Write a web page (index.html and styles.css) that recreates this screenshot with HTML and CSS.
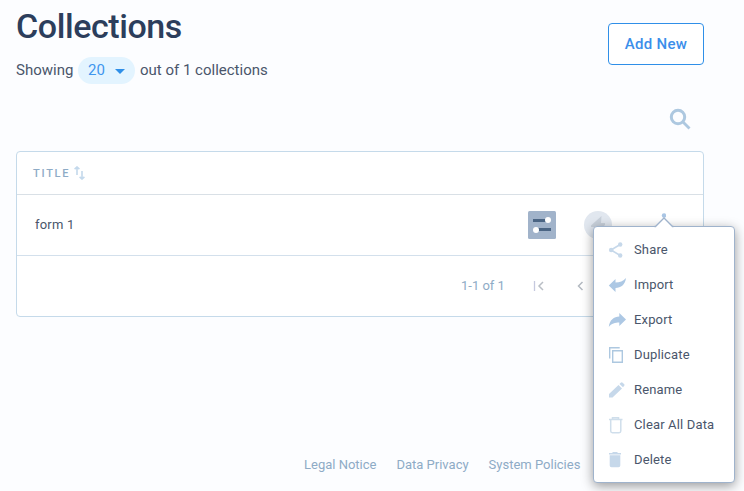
FILE: index.html
```html
<!DOCTYPE html>
<html lang="en">
<head>
<meta charset="utf-8">
<title>Collections</title>
<link rel="stylesheet" href="styles.css">
</head>
<body>
<main class="page">
  <header class="header">
    <div>
      <h1 class="heading">Collections</h1>
      <div class="summary">
        <span class="showing">Showing</span>
        <button class="count">20<svg width="10" height="5" viewBox="0 0 10 5"><path d="M0 0h10L5 5z" fill="#2f8fe8"/></svg></button>
        <span class="total">out of 1 collections</span>
      </div>
    </div>
    <button class="add">Add New</button>
  </header>
  <div class="search">
    <svg width="22" height="22" viewBox="0 0 22 22" fill="none" stroke="#adc8e0"><circle cx="9" cy="9" r="6.700" stroke-width="3"/><path d="M14 14l6.500 6.500" stroke-width="2.800"/></svg>
  </div>
  <section class="card">
    <div class="card-head">TITLE
      <svg width="11" height="14" viewBox="0 0 11 14" fill="none" stroke="#c4d9ec" stroke-width="1.600"><path d="M3 9V1.500M.6 3.200L3 1l2.400 2.200M8 5v7.500M5.600 10.800L8 13l2.400-2.200"/></svg>
    </div>
    <div class="card-row">
      <span class="name">form 1</span>
      <svg class="settings" width="28" height="28" viewBox="0 0 28 28"><rect width="28" height="28" rx="1.500" fill="#a1b3ca"/><path d="M5 9.500h15M8 18.500h15" stroke="#4b6584" stroke-width="3"/><circle cx="20" cy="9" r="3" fill="#fff"/><circle cx="8" cy="19" r="3" fill="#fff"/></svg>
      <svg class="bolt" width="28" height="28" viewBox="0 0 28 28"><circle cx="14" cy="14" r="14" fill="#e1e7ef"/><path d="M17.500 5L7 14.500V16h5.500L10 23 21 14v-2h-4z" fill="#c8d0da"/></svg>
      <svg class="dots" width="5" height="20" viewBox="0 0 5 20" fill="#a9c5e4"><circle cx="3" cy="2.500" r="2.200"/><circle cx="3" cy="10" r="2.200"/><circle cx="3" cy="17" r="2.200"/></svg>
    </div>
    <div class="card-foot">
      <span class="range">1-1 of 1</span>
      <svg class="first" width="11" height="10" viewBox="0 0 11 10" fill="none"><path d="M1.500 0v10" stroke="#c5c9df" stroke-width="1.300"/><path d="M10 1L6 5l4 4" stroke="#b9bec5" stroke-width="1.500"/></svg>
      <svg class="prev" width="7" height="10" viewBox="0 0 7 10" fill="none"><path d="M5.500 1L1.500 5l4 4" stroke="#b3b9c1" stroke-width="1.500"/></svg>
    </div>
  </section>
  <footer class="footer"><a>Legal Notice</a><a>Data Privacy</a><a>System Policies</a></footer>
</main>
<nav class="menu">
  <svg class="caret" width="20" height="11" viewBox="0 0 20 11"><path d="M1 10L10 1l9 9v1H1z" fill="#fff"/><path d="M.5 9.500h1L10 1l8.500 8.500h1" fill="none" stroke="#9fb3cc" stroke-width="1.300"/></svg>
  <div class="item"><svg viewBox="0 0 18 18" fill="#c6d8ea"><path d="M13 3L3 9l10 6" fill="none" stroke="#c6d8ea" stroke-width="1.600"/><circle cx="12.200" cy="3.500" r="2.200"/><circle cx="3.200" cy="9" r="2.300"/><circle cx="12.200" cy="14.500" r="2.200"/></svg><span>Share</span></div>
  <div class="item"><svg viewBox="0 0 18 18" fill="#adc8e4"><path d="M.8 9.500L7.500 3v3.500C11.500 6.500 15.500 5 18 2c-.7 6.500-5 10-10.500 10v4z"/></svg><span>Import</span></div>
  <div class="item"><svg viewBox="0 0 18 18" fill="#adc8e4"><path d="M18 8.500L11.300 2v3.500C6 5.500 1.500 9 .8 16c2.500-3.500 6.500-4.500 10.500-4.500V15z"/></svg><span>Export</span></div>
  <div class="item"><svg viewBox="0 0 18 18" fill="none" stroke="#adc8e0" stroke-width="1.400"><path d="M1.700 12.500V1.700h10M4.700 4.700h9.600v11.600H4.700z"/></svg><span>Duplicate</span></div>
  <div class="item"><svg viewBox="0 0 18 18" fill="#c6d8ea"><path d="M1 16.500V13L10.500 4 14 7.500 4.500 16.500zM11.500 3l1.200-1.200c.7-.7 1.300-.7 2 0l1.300 1.300c.7.7.7 1.300 0 2L15 6.300z"/></svg><span>Rename</span></div>
  <div class="item"><svg viewBox="0 0 18 18" fill="none" stroke="#cfdeeb" stroke-width="1.500"><path d="M1 3.500h13.500M4.500 3V1.700h6V3M2.700 4v11q0 1.700 1.700 1.700h6.700q1.700 0 1.700-1.700V4"/></svg><span>Clear All Data</span></div>
  <div class="item"><svg viewBox="0 0 18 18" fill="#c6d8ea"><path d="M1 2h3l1-1h4l1 1h3v1.500H1zM1.700 4.200h10.600V14.500q0 1.800-1.800 1.800h-7q-1.800 0-1.800-1.800z"/></svg><span>Delete</span></div>
</nav>
</body>
</html>
```
FILE: styles.css
```css
* { box-sizing: border-box; }
body {
  margin: 0;
  height: 491px;
  overflow: hidden;
  background: #fcfdff;
  font-family: Roboto, sans-serif;
  color: #4a566b;
}
svg { display: block; flex: none; }
button { font-family: inherit; }
.page { padding: 6px 40px 0 16px; height: 491px; display: flex; flex-direction: column; }
.header { display: flex; justify-content: space-between; height: 92px; flex: none; }
.heading { margin: 0; font-size: 34px; font-weight: 500; line-height: 40px; letter-spacing: -.42px; color: #2c3e5c; }
.summary { display: flex; align-items: center; height: 27px; margin-top: 11px; font-size: 15px; line-height: 19px; white-space: nowrap; }
.showing { width: 62px; }
.count {
  display: flex; align-items: center; justify-content: space-between;
  width: 57px; height: 27px; padding: 0 10px 2px;
  border: 0; border-radius: 14px; background: #e3f4ff;
  color: #3f96ee; font-size: 15px;
}
.count svg { margin-top: 4px; }
.total { margin-left: 5px; }
.add {
  width: 96px; height: 42px; margin-top: 17px; padding: 0;
  border: 1px solid #2f8fe8; border-radius: 4px; background: #fff;
  color: #3b8eea; font-size: 15px; font-weight: 500; letter-spacing: .3px;
}
.search { display: flex; justify-content: flex-end; height: 53px; flex: none; padding: 10px 13px 0 0; }
.card { height: 166px; flex: none; border: 1px solid #c5daea; border-radius: 4px; background: #fff; }
.card-head {
  display: flex; align-items: center; gap: 4px; height: 43px; padding-left: 16px;
  border-bottom: 1px solid #d9e0e6;
  color: #8eabc6; font-size: 11px; font-weight: 500; letter-spacing: 1.75px;
}
.card-row { display: flex; align-items: center; height: 61px; padding-left: 18px; border-bottom: 1px solid #d3e0ec; font-size: 13px; }
.name { width: 493px; padding-bottom: 2px; letter-spacing: .2px; }
.bolt { margin-left: 28px; }
.dots { margin-left: 49px; margin-top: -5px; }
.card-foot { display: flex; align-items: center; height: 60px; padding-left: 444px; color: #8eabc6; font-size: 13px; }
.range { width: 72px; padding-bottom: 2px; }
.prev { margin-left: 33px; }
.footer { display: flex; gap: 20px; margin-top: 139px; padding-left: 288px; font-size: 13px; line-height: 18px; color: #8eabc6; }
.menu {
  position: absolute; left: 593px; top: 226px; width: 142px; height: 257px; padding: 5px 0 0 14px;
  border: 1px solid #9fb3cc; border-radius: 4px; background: #fff;
  box-shadow: 0 3px 12px rgba(0, 0, 0, .4);
}
.caret { position: absolute; left: 60px; top: -10px; }
.item { display: flex; align-items: center; height: 35px; font-size: 13px; letter-spacing: .15px; white-space: nowrap; }
.item svg { width: 18px; height: 18px; margin-right: 8px; }
```
